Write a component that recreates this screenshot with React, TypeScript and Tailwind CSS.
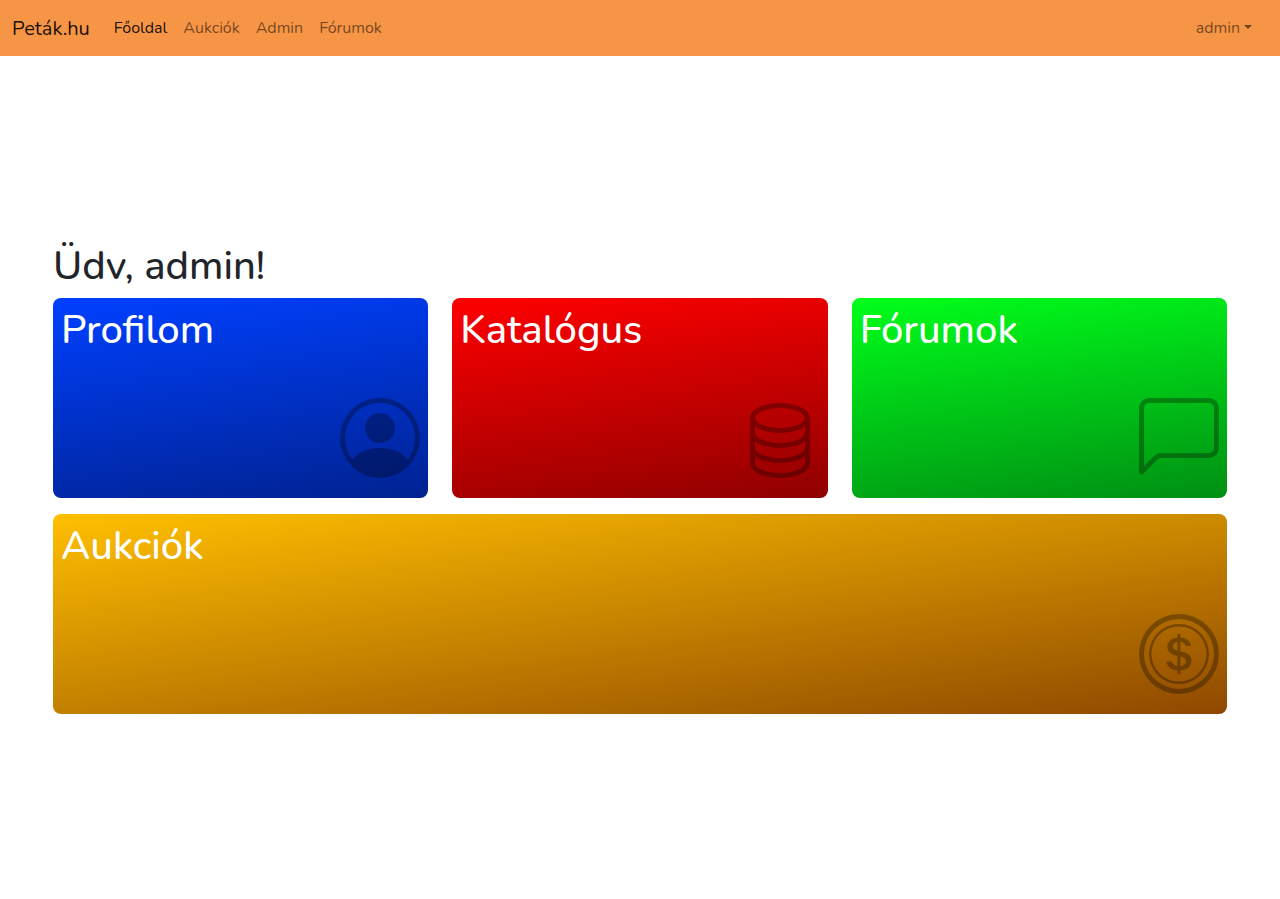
import type { IconType } from "react-icons";
import { BsChatLeft, BsCoin, BsDatabase, BsPersonCircle } from "react-icons/bs";

const navLinks = [
  { label: "Főoldal", active: true },
  { label: "Aukciók", active: false },
  { label: "Admin", active: false },
  { label: "Fórumok", active: false },
];

type Tile = { title: string; Icon: IconType; className: string };

const tiles: Tile[] = [
  {
    title: "Profilom",
    Icon: BsPersonCircle,
    className: "bg-[linear-gradient(172deg,#0040ff,#002291)]",
  },
  {
    title: "Katalógus",
    Icon: BsDatabase,
    className: "bg-[linear-gradient(172deg,#ff0000,#8f0000)]",
  },
  {
    title: "Fórumok",
    Icon: BsChatLeft,
    className: "bg-[linear-gradient(172deg,#00ff1a,#008f13)]",
  },
  {
    title: "Aukciók",
    Icon: BsCoin,
    className: "md:col-span-3 bg-[linear-gradient(172deg,#ffbf00,#c78500_50%,#8f4800)]",
  },
];

function TileLink({ title, Icon, className }: Tile) {
  return (
    <a
      href="#"
      className={`flex h-[200px] flex-col justify-between rounded-lg px-2 pt-2 pb-5 text-white ${className}`}
    >
      <h2 className="text-[40px] leading-12 font-medium">{title}</h2>
      <Icon aria-hidden="true" className="size-20 self-end text-black/30" />
    </a>
  );
}

export default function App() {
  return (
    <div className="flex min-h-screen flex-col bg-white font-[Nunito,'Noto_Sans',sans-serif] text-[#212529]">
      <nav className="flex min-h-14 flex-wrap items-center bg-[#f69546] px-3">
        <a href="#" className="mr-4 pt-0.5 text-xl text-black/90">
          Peták.hu
        </a>
        <ul className="flex flex-1 flex-wrap">
          {navLinks.map(({ label, active }) => (
            <li key={label}>
              <a
                href="#"
                aria-current={active ? "page" : undefined}
                className={`block p-2 ${active ? "text-black/90" : "text-black/55"}`}
              >
                {label}
              </a>
            </li>
          ))}
        </ul>
        <button type="button" className="mr-2 flex items-center gap-1 p-2 text-black/55">
          admin
          <span className="mb-0.5 border-x-4 border-t-4 border-x-transparent border-t-current" />
        </button>
      </nav>
      <main className="flex flex-1 flex-col justify-center px-[53px]">
        <h1 className="mb-2 text-[40px] leading-12 font-medium">Üdv, admin!</h1>
        <div className="grid gap-x-6 gap-y-4 md:grid-cols-3">
          {tiles.map((tile) => (
            <TileLink key={tile.title} {...tile} />
          ))}
        </div>
      </main>
    </div>
  );
}
